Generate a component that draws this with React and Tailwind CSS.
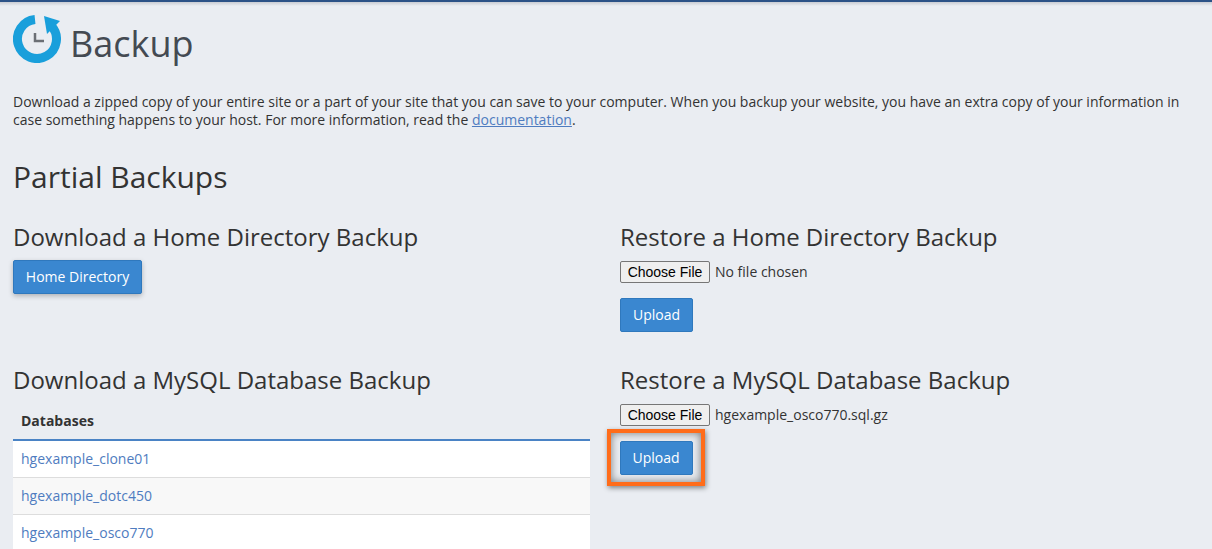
const font = { fontFamily: '"Open Sans", sans-serif' };

function BackupIcon() {
  return (
    <svg width="48" height="48" viewBox="0 0 48 48" className="shrink-0">
      <path d="M22 4.6 A19.5 19.5 0 1 0 38.5 11" fill="none" stroke="#199fdb" strokeWidth="9" />
      <path d="M31 1 L47 6 L34 19 Z" fill="#199fdb" />
      <path d="M22 18 V26 H31" fill="none" stroke="#6b6f75" strokeWidth="2.5" />
    </svg>
  );
}

function BlueButton({ children, className = "" }) {
  return (
    <button className={`h-[34px] bg-[#3a87d0] text-white text-sm rounded-[2px] border border-[#2f78bd] ${className}`}>
      {children}
    </button>
  );
}

function FilePicker({ name }) {
  return (
    <div className="flex items-center h-[22px] text-sm text-[#333]">
      <button className="w-[90px] h-[22px] bg-[#efefef] border border-[#767676] rounded-[2px] text-[14px] text-black font-['Liberation_Sans',sans-serif]">
        Choose File
      </button>
      <span className="ml-[5px]">{name}</span>
    </div>
  );
}

const databases = ["hgexample_clone01", "hgexample_dotc450", "hgexample_osco770"];

export default function App() {
  return (
    <div style={font} className="relative h-[549px] w-[1212px] overflow-hidden bg-[#eaedf2] text-[#333] border-t-2 border-[#2c5287]">
      <div className="absolute inset-x-0 top-0 h-[4px] bg-gradient-to-b from-[#c9ccd3] to-transparent" />
      <div className="px-[13px]">
        <div className="flex items-center gap-[9px] pt-[13px] h-[61px]">
          <BackupIcon />
          <h1 className="text-[36px] leading-[40px] text-[#444a52] mt-[9px]">Backup</h1>
        </div>
        <p className="mt-[30px] text-sm leading-[18px] w-[1180px]">
          Download a zipped copy of your entire site or a part of your site that you can save to your computer. When you backup your website, you have an extra copy of your information in case something happens to your host. For more information, read the{" "}
          <a href="#" className="text-[#4f7cc0] underline">documentation</a>.
        </p>
        <h2 className="mt-[31px] text-[30px] leading-[33px]">Partial Backups</h2>

        <div className="grid grid-cols-[577px_1fr] gap-x-[30px] mt-[31px]">
          <div className="h-[143px]">
            <h3 className="text-2xl leading-[26px]">Download a Home Directory Backup</h3>
            <BlueButton className="mt-[10px] w-[129px] shadow-[0_2px_5px_rgba(0,0,0,0.25)]">Home Directory</BlueButton>
          </div>
          <div>
            <h3 className="text-2xl leading-[26px]">Restore a Home Directory Backup</h3>
            <div className="mt-[11px]"><FilePicker name="No file chosen" /></div>
            <BlueButton className="mt-[15px] w-[73px]">Upload</BlueButton>
          </div>

          <div>
            <h3 className="text-2xl leading-[26px]">Download a MySQL Database Backup</h3>
            <div className="mt-[10px] pl-2 h-[38px] flex items-center border-b-2 border-[#4a83c5] text-sm font-bold">Databases</div>
            {databases.map((db, i) => (
              <div key={db} className={`h-[37px] pl-2 flex items-center text-sm text-[#4f7cc0] border-b border-[#ddd] ${i % 2 ? "bg-[#f8f8f8]" : "bg-white"}`}>
                {db}
              </div>
            ))}
          </div>
          <div>
            <h3 className="text-2xl leading-[26px]">Restore a MySQL Database Backup</h3>
            <div className="mt-[11px]"><FilePicker name="hgexample_osco770.sql.gz" /></div>
            <div className="mt-[3px] -ml-[13px] w-[98px] h-[57px] flex items-center justify-center border-[4px] border-[#ff6c1a] shadow-[1px_2px_5px_rgba(0,0,0,0.45),inset_0_0_8px_rgba(0,0,0,0.5)]">
              <BlueButton className="w-[73px]">Upload</BlueButton>
            </div>
          </div>
        </div>
      </div>
    </div>
  );
}
